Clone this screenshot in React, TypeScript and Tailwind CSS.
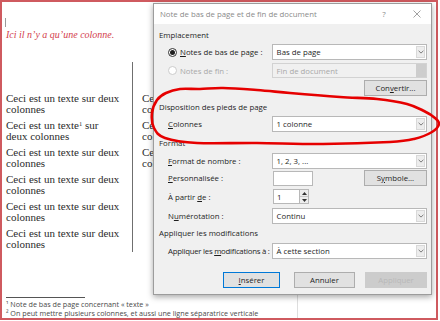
import React from "react";

function Chev({ c = "#6e6e6e" }: { c?: string }) {
  return (
    <svg width="6" height="4" viewBox="0 0 6 4">
      <path d="M0.6 0.8 L3 3.1 L5.4 0.8" fill="none" stroke={c} strokeWidth="0.9" />
    </svg>
  );
}

function Select({ value, disabled = false }: { value: string; disabled?: boolean }) {
  if (disabled) {
    return (
      <div className="flex h-full w-full items-stretch border border-[#d2d2d2] bg-[#f0f0f0] text-[#a8a8a8]">
        <div className="flex flex-1 items-center pl-[4px]">{value}</div>
        <div className="flex w-[10px] items-center justify-center bg-[#cdcdcd]">
          <Chev c="#cdcdcd" />
        </div>
      </div>
    );
  }
  return (
    <div className="flex h-full w-full items-stretch border border-[#b8b8b8] bg-white text-[#1e1e1e]">
      <div className="flex flex-1 items-center pl-[4px]">{value}</div>
      <div className="my-[1px] mr-[1px] flex w-[9px] items-center justify-center border border-[#d9d9d9] bg-[#ededed]">
        <Chev />
      </div>
    </div>
  );
}

function smoothClosed(pts: number[][]) {
  const n = pts.length;
  let d = `M${pts[0][0]} ${pts[0][1]}`;
  for (let i = 0; i < n; i++) {
    const p0 = pts[(i - 1 + n) % n];
    const p1 = pts[i];
    const p2 = pts[(i + 1) % n];
    const p3 = pts[(i + 2) % n];
    const c1x = p1[0] + (p2[0] - p0[0]) / 6;
    const c1y = p1[1] + (p2[1] - p0[1]) / 6;
    const c2x = p2[0] - (p3[0] - p1[0]) / 6;
    const c2y = p2[1] - (p3[1] - p1[1]) / 6;
    d += ` C${c1x.toFixed(1)} ${c1y.toFixed(1)} ${c2x.toFixed(1)} ${c2y.toFixed(1)} ${p2[0]} ${p2[1]}`;
  }
  return d;
}

const ellipse = [
  [152, 113], [157, 100], [166, 93], [180, 89], [200, 89], [223, 88], [257, 90], [290, 93],
  [340, 97], [377, 99], [407, 104], [424, 111], [435, 118], [439, 124], [432, 132], [414, 139],
  [390, 142], [323, 144], [257, 143], [197, 143], [165, 138], [154, 128],
];

function Para({ a, b, sup }: { a: string; b: string; sup?: string }) {
  return (
    <div className="mb-[5px] whitespace-nowrap">
      <div className="h-[11px]">
        {a}
        {sup ? <sup className="text-[6.5px]">{sup}</sup> : null}
        {sup ? " sur" : null}
      </div>
      <div className="h-[11px]">{b}</div>
    </div>
  );
}

export default function App() {
  return (
    <div className="relative h-[321px] w-[440px] overflow-hidden bg-white">
      <div className="h-[320px] w-[438px] border-2 border-[#cf5a5f] pl-[4px] font-['Liberation_Serif',serif] text-[11px] leading-[11px] text-[#2b2b2b]">
        <div className="ml-[-1px] mt-[16px] h-[9px] w-[1px] bg-[#9a9a9a]" />
        <div className="mt-[2px] h-[12px] text-[10px] italic leading-[12px] text-[#d3414d]">
          Ici il n’y a qu’une colonne.
        </div>
        <div className="mt-[21px] flex h-[190px]">
          <div className="w-[126px] pt-[31px]">
            <Para a="Ceci est un texte sur deux" b="colonnes" />
            <Para a="Ceci est un texte" sup="1" b="deux colonnes" />
            <Para a="Ceci est un texte sur deux" b="colonnes" />
            <Para a="Ceci est un texte sur deux" b="colonnes" />
            <Para a="Ceci est un texte sur deux" b="colonnes" />
            <Para a="Ceci est un texte sur deux" b="colonnes" />
          </div>
          <div className="w-[1px] bg-[#6f6f6f]" />
          <div className="w-[140px] overflow-hidden pl-[9px] pt-[31px]">
            <Para a="Ceci est un texte sur deux" b="colonnes" />
            <Para a="Ceci est un texte sur deux" b="colonnes" />
            <Para a="Ceci est un texte sur deux" b="colonnes" />
          </div>
        </div>
        <div className="flex">
          <div className="w-[291px] font-['Open_Sans','Noto_Sans',sans-serif] text-[7.2px] leading-[9px] text-[#4a4a4a]">
            <div className="mt-[45px] h-[1px] w-[79px] bg-[#555555]" />
            <div className="mt-[2px] h-[9px] whitespace-nowrap">¹ Note de bas de page concernant « texte »</div>
            <div className="h-[9px] whitespace-nowrap">² On peut mettre plusieurs colonnes, et aussi une ligne séparatrice verticale</div>
          </div>
          <div className="h-[24px] w-[1px] self-end bg-[#dedede]" />
        </div>
      </div>

      {/* Dialog */}
      <div className="absolute left-[153px] top-[3px] flex h-[292px] w-[279px] flex-col border border-[#9c9c9c] bg-[#f0f0f0] font-['Open_Sans','Noto_Sans',sans-serif] text-[7.8px] leading-[10px] text-[#1e1e1e] shadow-[0_2px_6px_rgba(0,0,0,0.35)]">
        <div className="flex h-[20px] items-center bg-white pl-[6px] text-[#8a8a8a]">
          <div className="flex-1">Note de bas de page et de fin de document</div>
          <div className="w-[10px] text-center text-[8px]">?</div>
          <div className="ml-[23px] mr-[9px] flex w-[10px] justify-center">
            <svg width="8" height="8" viewBox="0 0 8 8">
              <path d="M0.5 0.5 L7.5 7.5 M7.5 0.5 L0.5 7.5" stroke="#8a8a8a" strokeWidth="0.8" />
            </svg>
          </div>
        </div>
        <div className="flex flex-1 flex-col pl-[5px] pr-[4px]">
          <div className="mt-[4px] flex h-[14px] items-center">Emplacement</div>
          <div className="mt-[2px] flex h-[16px] items-center">
            <div className="flex w-[113px] items-center pl-[9px]">
              <div className="flex h-[9px] w-[9px] items-center justify-center rounded-full border border-[#333333] bg-white">
                <div className="h-[5px] w-[5px] rounded-full bg-[#1e1e1e]" />
              </div>
              <span className="ml-[3px]">
                <span className="underline">N</span>otes de bas de page :
              </span>
            </div>
            <div className="h-full w-[156px]">
              <Select value="Bas de page" />
            </div>
          </div>
          <div className="mt-[3px] flex h-[15px] items-center">
            <div className="flex w-[113px] items-center pl-[9px] text-[#a8a8a8]">
              <div className="h-[9px] w-[9px] rounded-full border border-[#cccccc] bg-white" />
              <span className="ml-[3px]">Notes de fin :</span>
            </div>
            <div className="h-full w-[156px]">
              <Select value="Fin de document" disabled />
            </div>
          </div>
          <div className="mt-[2px] flex h-[16px] justify-end">
            <div className="flex w-[63px] items-center justify-center border border-[#adadad] bg-[#e1e1e1]">
              Con<span className="underline">v</span>ertir...
            </div>
          </div>
          <div className="mt-[4px] flex h-[14px] items-center">Disposition des pieds de page</div>
          <div className="mt-[2px] flex h-[16px] items-center">
            <div className="w-[113px] pl-[9px]">
              <span className="underline">C</span>olonnes
            </div>
            <div className="h-full w-[156px]">
              <Select value="1 colonne" />
            </div>
          </div>
          <div className="mt-[4px] flex h-[14px] items-center">Format</div>
          <div className="mt-[3px] flex h-[16px] items-center">
            <div className="w-[113px] pl-[9px]">
              <span className="underline">F</span>ormat de nombre :
            </div>
            <div className="h-full w-[156px]">
              <Select value="1, 2, 3, ..." />
            </div>
          </div>
          <div className="mt-[1px] flex h-[16px] items-center">
            <div className="w-[114px] pl-[9px]">
              <span className="underline">P</span>ersonnalisée :
            </div>
            <div className="h-[15px] w-[40px] border border-[#b8b8b8] bg-white" />
            <div className="flex-1" />
            <div className="flex h-full w-[63px] items-center justify-center border border-[#adadad] bg-[#e1e1e1]">
              S<span className="underline">y</span>mbole...
            </div>
          </div>
          <div className="mt-[3px] flex h-[15px] items-center">
            <div className="w-[114px] pl-[9px]">
              À partir <span className="underline">d</span>e :
            </div>
            <div className="flex h-full w-[27px] items-center border border-[#b8b8b8] bg-white pl-[3px]">1</div>
            <div className="flex h-full w-[9px] flex-col border border-l-0 border-[#b8b8b8] bg-[#ededed]">
              <div className="flex flex-1 items-center justify-center border-b border-[#c8c8c8]">
                <svg width="5" height="3" viewBox="0 0 5 3">
                  <path d="M0 3 L2.5 0 L5 3 Z" fill="#333333" />
                </svg>
              </div>
              <div className="flex flex-1 items-center justify-center">
                <svg width="5" height="3" viewBox="0 0 5 3">
                  <path d="M0 0 L2.5 3 L5 0 Z" fill="#333333" />
                </svg>
              </div>
            </div>
          </div>
          <div className="mt-[4px] flex h-[16px] items-center">
            <div className="w-[113px] pl-[9px]">
              N<span className="underline">u</span>mérotation :
            </div>
            <div className="h-full w-[156px]">
              <Select value="Continu" />
            </div>
          </div>
          <div className="mt-[2px] flex h-[14px] items-center">Appliquer les modifications</div>
          <div className="mt-[3px] flex h-[16px] items-center">
            <div className="w-[113px] whitespace-nowrap pl-[9px] tracking-[-0.25px]">
              Appliquer les <span className="underline">m</span>odifications à :
            </div>
            <div className="h-full w-[156px]">
              <Select value="À cette section" />
            </div>
          </div>
          <div className="mt-[13px] flex h-[16px] justify-end">
            <div className="flex w-[57px] items-center justify-center border border-[#0078d7] bg-[#e1e1e1]">
              <span className="underline">I</span>nsérer
            </div>
            <div className="ml-[14px] flex w-[61px] items-center justify-center border border-[#adadad] bg-[#e1e1e1]">
              Annuler
            </div>
            <div className="ml-[10px] flex w-[62px] items-center justify-center border border-[#cccccc] bg-[#cccccc] text-[#b8b8b8]">
              Appliquer
            </div>
          </div>
        </div>
      </div>

      <svg className="pointer-events-none absolute left-0 top-0" width="440" height="321" viewBox="0 0 440 321">
        <path d={smoothClosed(ellipse)} fill="none" stroke="#e60000" strokeWidth="2.6" strokeLinecap="round" strokeLinejoin="round" />
      </svg>
    </div>
  );
}
